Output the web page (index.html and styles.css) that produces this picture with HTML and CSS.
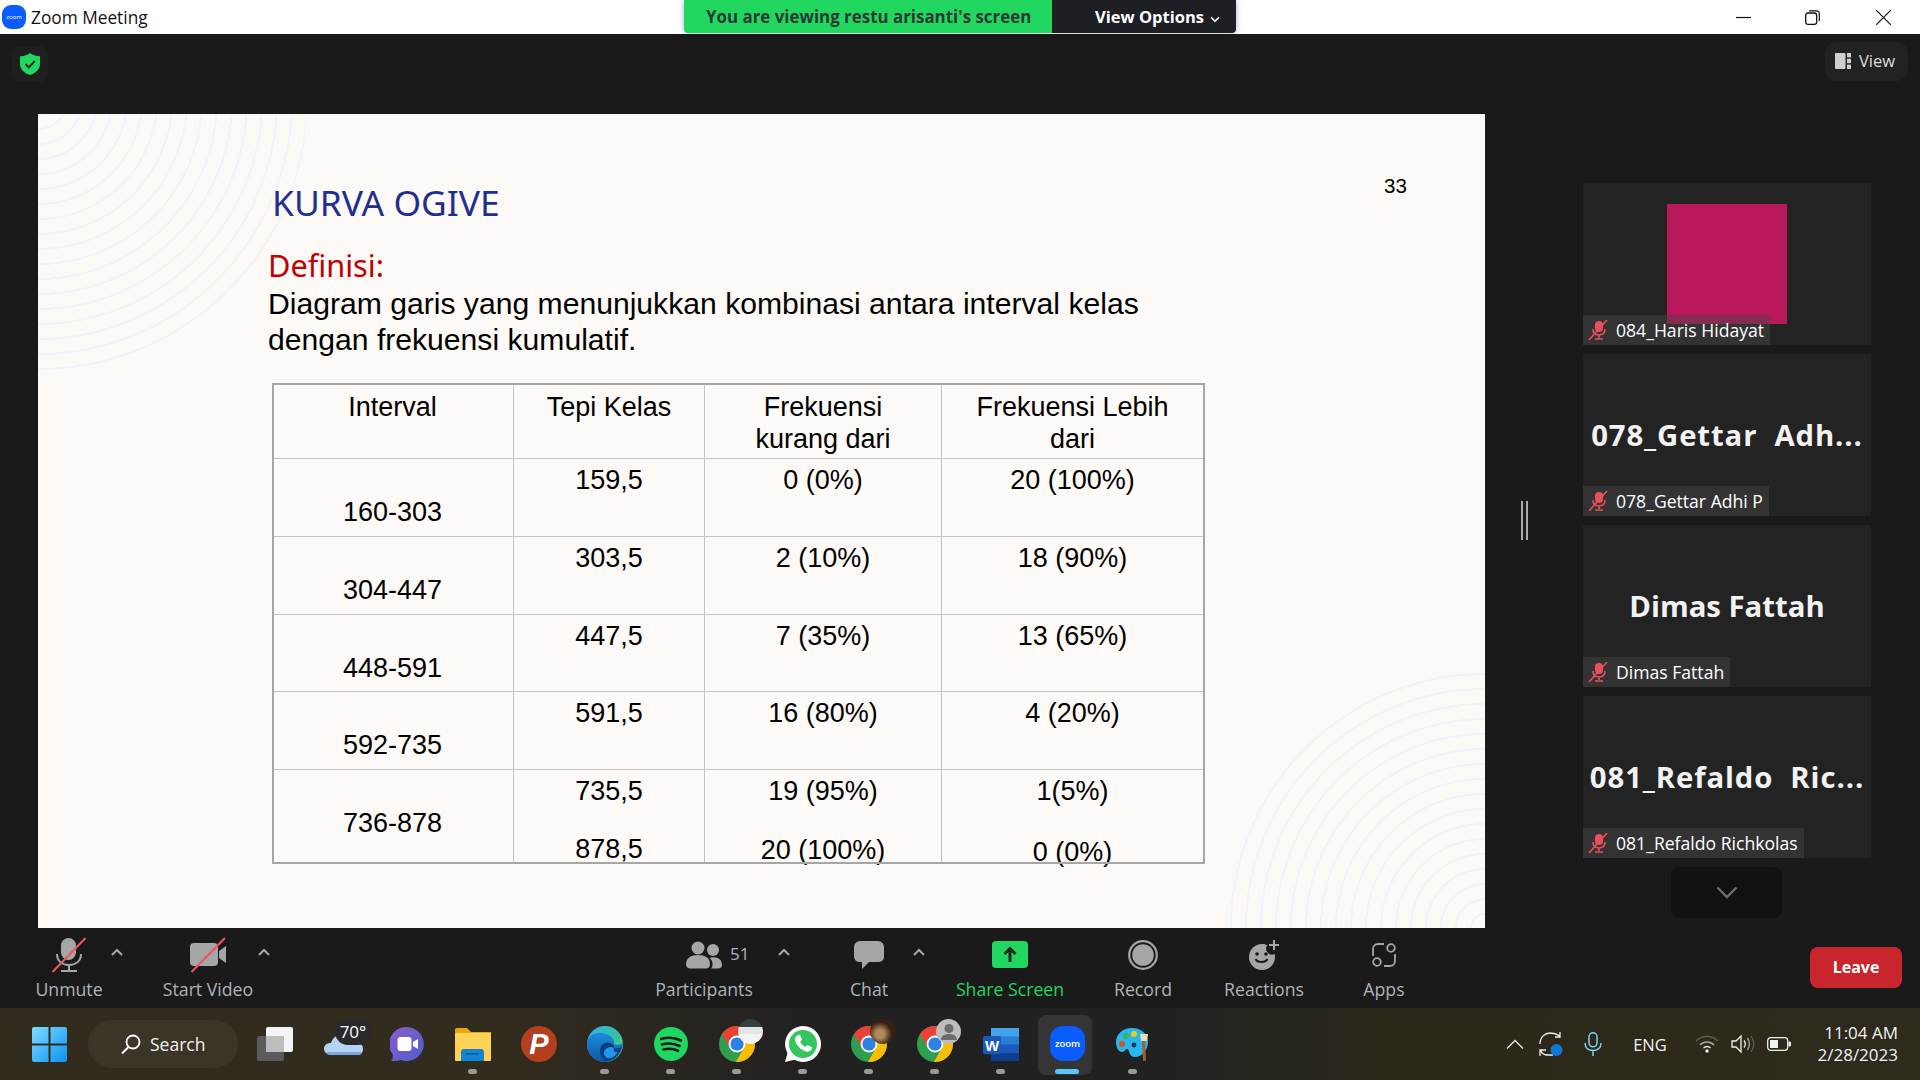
FILE: index.html
```html
<!DOCTYPE html>
<html>
<head>
    <meta charset="utf-8">
    <title>Zoom Meeting</title>
    <link rel="stylesheet" href="styles.css">
</head>
<body>
<svg class="defs" width="0" height="0">
    <symbol id="tagmute" viewBox="0 0 20 20">
        <rect x="7" y="1" width="8" height="11" rx="4" fill="#e8505b"/>
        <path d="M5 9c0 4 2.5 6 6 6s6-2 6-6M11 15v3M7 19h8" fill="none" stroke="#e8505b" stroke-width="1.6"/>
        <path d="M19 0L1 20" stroke="#e8505b" stroke-width="1.6"/>
    </symbol>
    <symbol id="chrome" viewBox="0 0 36 36">
        <clipPath id="chromeclip"><circle cx="18" cy="18" r="18"/></clipPath>
        <g clip-path="url(#chromeclip)">
            <rect width="36" height="36" fill="#2f9e4f"/>
            <polygon points="18,10 40,10 40,-20 -20,-20 -3.9,-4 11.1,22 18,18" fill="#ea4335"/>
            <polygon points="24.9,22 9.9,48 40,48 40,10 18,10 18,18" fill="#fbbc04"/>
        </g>
        <circle cx="18" cy="18" r="8.4" fill="#fff"/>
        <circle cx="18" cy="18" r="6.6" fill="#2f7fe8"/>
    </symbol>
</svg>

<div class="window">
    <div class="titlebar">
        <svg class="app-logo" viewBox="0 0 24 24" width="24" height="24">
            <rect width="24" height="24" rx="9" fill="#0b5cff"/>
            <text x="12" y="14" text-anchor="middle" class="app-logo-txt">zoom</text>
        </svg>
        <div class="app-name">Zoom Meeting</div>
        <div class="winbtns">
            <svg width="15" height="15" viewBox="0 0 15 15"><path d="M0 7.5h15" stroke="#111" stroke-width="1.2"/></svg>
            <svg width="15" height="15" viewBox="0 0 15 15"><rect x="0.7" y="3" width="11" height="11.3" rx="2.4" fill="none" stroke="#111" stroke-width="1.3"/><path d="M4 .8h7.5a2.8 2.8 0 0 1 2.8 2.8V11" fill="none" stroke="#111" stroke-width="1.2"/></svg>
            <svg class="win-close" width="15" height="15" viewBox="0 0 15 15"><path d="M0 0l15 15M15 0L0 15" stroke="#111" stroke-width="1.2"/></svg>
        </div>
    </div>

    <div class="banner">
        <div class="banner-msg">You are viewing restu arisanti's screen</div>
        <div class="banner-opt">View Options
            <svg width="10" height="7" viewBox="0 0 10 7"><path d="M1 1.2l4 4 4-4" fill="none" stroke="#fff" stroke-width="1.6"/></svg>
        </div>
    </div>

    <div class="main">
        <div class="shield">
            <svg width="20" height="22" viewBox="0 0 20 22"><path d="M10 0c2.5 2 5.500 3 10 3.300V11c0 5-4 9-10 11C4 20 0 16 0 11V3.300C4.500 3 7.500 2 10 0z" fill="#22d75f"/><path d="M5.500 11l3.300 3.500 6-6.500" fill="none" stroke="#1f3327" stroke-width="2"/></svg>
        </div>
        <div class="viewbtn">
            <svg width="16" height="16" viewBox="0 0 16 16"><rect width="10.500" height="16" rx="1" fill="#cfcfcf"/><rect x="12" width="4" height="4.400" fill="#cfcfcf"/><rect x="12" y="5.800" width="4" height="4.400" fill="#cfcfcf"/><rect x="12" y="11.600" width="4" height="4.400" fill="#cfcfcf"/></svg>
            View
        </div>

        <div class="stage">
            <div class="slide">
                <div class="rings rings-tl"></div>
                <div class="rings rings-br"></div>
                <div class="pageno">33</div>
                <div class="slide-title">KURVA OGIVE</div>
                <div class="slide-def">Definisi:</div>
                <div class="slide-par">Diagram garis yang menunjukkan kombinasi antara interval kelas<br>dengan frekuensi kumulatif.</div>

                <div class="tbl">
                    <div class="c c-head">Interval</div>
                    <div class="c c-head">Tepi Kelas</div>
                    <div class="c c-head">Frekuensi<br>kurang dari</div>
                    <div class="c c-head c-end">Frekuensi Lebih<br>dari</div>

                    <div class="c c-low">160-303</div>
                    <div class="c">159,5</div>
                    <div class="c">0 (0%)</div>
                    <div class="c c-end">20 (100%)</div>

                    <div class="c c-low">304-447</div>
                    <div class="c">303,5</div>
                    <div class="c">2 (10%)</div>
                    <div class="c c-end">18 (90%)</div>

                    <div class="c c-low">448-591</div>
                    <div class="c">447,5</div>
                    <div class="c">7 (35%)</div>
                    <div class="c c-end">13 (65%)</div>

                    <div class="c c-low">592-735</div>
                    <div class="c">591,5</div>
                    <div class="c">16 (80%)</div>
                    <div class="c c-end">4 (20%)</div>

                    <div class="c c-low c-bot">736-878</div>
                    <div class="c c-bot">735,5<div class="gap26">878,5</div></div>
                    <div class="c c-bot">19 (95%)<div class="gap27">20 (100%)</div></div>
                    <div class="c c-end c-bot">1(5%)<div class="gap29">0 (0%)</div></div>
                </div>
            </div>
        </div>

        <div class="handle"></div>

        <div class="side">
            <div class="tile">
                <div class="avatar"></div>
                <div class="tag"><svg width="20" height="20"><use href="#tagmute"/></svg>084_Haris Hidayat</div>
            </div>
            <div class="tile">
                <div class="bigname bigname-long">078_Gettar  Adh...</div>
                <div class="tag"><svg width="20" height="20"><use href="#tagmute"/></svg>078_Gettar Adhi P</div>
            </div>
            <div class="tile">
                <div class="bigname">Dimas Fattah</div>
                <div class="tag"><svg width="20" height="20"><use href="#tagmute"/></svg>Dimas Fattah</div>
            </div>
            <div class="tile">
                <div class="bigname bigname-long">081_Refaldo  Ric...</div>
                <div class="tag"><svg width="20" height="20"><use href="#tagmute"/></svg>081_Refaldo Richkolas</div>
            </div>
            <div class="more">
                <svg width="22" height="13" viewBox="0 0 22 13"><path d="M1.500 1.500l9.500 9.500 9.500-9.500" fill="none" stroke="#6b6b78" stroke-width="2.400"/></svg>
            </div>
        </div>
    </div>

    <div class="toolbar">
        <div class="tool t-mic">
            <div class="tool-icon">
                <svg width="36" height="36" viewBox="0 0 36 36"><rect x="10" y="1" width="15" height="22" rx="7.500" fill="#a6a6a6"/><path d="M6 17c0 7 5 11 12 11s12-4 12-11M18 28v5M10 34h16" fill="none" stroke="#a6a6a6" stroke-width="2"/><path d="M34.500 1L1.500 35" stroke="#f0555f" stroke-width="2"/></svg>
            </div>
            <div class="tool-lbl">Unmute</div>
        </div>
        <div class="caret c-m7"><svg width="12" height="8" viewBox="0 0 12 8"><path d="M1 7l5-5 5 5" fill="none" stroke="#a6a6a6" stroke-width="2"/></svg></div>
        <div class="tool t-video">
            <div class="tool-icon">
                <svg width="36" height="36" viewBox="0 0 36 36"><rect y="6" width="28" height="23" rx="4" fill="#a6a6a6"/><path d="M29 14l7-5v17l-7-5z" fill="#a6a6a6"/><path d="M35 1L1.500 35" stroke="#f0555f" stroke-width="2"/></svg>
            </div>
            <div class="tool-lbl">Start Video</div>
        </div>
        <div class="caret"><svg width="12" height="8" viewBox="0 0 12 8"><path d="M1 7l5-5 5 5" fill="none" stroke="#a6a6a6" stroke-width="2"/></svg></div>

        <div class="tool t-part">
            <div class="tool-icon">
                <svg width="36" height="28" viewBox="0 0 36 28"><circle cx="12" cy="7" r="6.500" fill="#a6a6a6"/><circle cx="27" cy="9" r="6" fill="#a6a6a6"/><path d="M0 23c0-6 5-9 12-9s12 3 12 9c0 3-2 4.500-4 4.500H4c-2 0-4-1.500-4-4.500z" fill="#a6a6a6"/><path d="M25 27.500c1.500-1 1.500-3 1.500-5 0-2-1-4-3-5.500 1-.5 2.500-.8 4-.8 5 0 8.500 3 8.500 7.500 0 2.500-1.500 3.800-3.500 3.800z" fill="#a6a6a6"/></svg>
            </div>
            <div class="count">51</div>
            <div class="tool-lbl">Participants</div>
        </div>
        <div class="caret c-p24"><svg width="12" height="8" viewBox="0 0 12 8"><path d="M1 7l5-5 5 5" fill="none" stroke="#a6a6a6" stroke-width="2"/></svg></div>
        <div class="tool t-chat">
            <div class="tool-icon">
                <svg width="30" height="28" viewBox="0 0 30 28"><path d="M6 0h18a6 6 0 0 1 6 6v10a5 5 0 0 1-5 5H15l-7 7v-7H6a6 6 0 0 1-6-5V6a6 6 0 0 1 6-6z" fill="#a6a6a6"/></svg>
            </div>
            <div class="tool-lbl">Chat</div>
        </div>
        <div class="caret c-m6"><svg width="12" height="8" viewBox="0 0 12 8"><path d="M1 7l5-5 5 5" fill="none" stroke="#a6a6a6" stroke-width="2"/></svg></div>
        <div class="tool t-share">
            <div class="tool-icon">
                <svg width="36" height="28" viewBox="0 0 36 28"><rect width="36" height="27" rx="4" fill="#22d75f"/><path d="M18 21V8M12.500 13L18 7.500l5.500 5.500" fill="none" stroke="#1a2a20" stroke-width="3"/></svg>
            </div>
            <div class="tool-lbl">Share Screen</div>
        </div>
        <div class="tool t-rec">
            <div class="tool-icon">
                <svg width="30" height="30" viewBox="0 0 30 30"><circle cx="15" cy="15" r="13.800" fill="none" stroke="#a6a6a6" stroke-width="2.200"/><circle cx="15" cy="15" r="10.800" fill="#a6a6a6"/></svg>
            </div>
            <div class="tool-lbl">Record</div>
        </div>
        <div class="tool t-react">
            <div class="tool-icon">
                <svg width="32" height="31" viewBox="0 0 32 31"><path d="M14 4a13 13 0 1 0 13 13c0-1-.1-2-.3-3a6 6 0 0 1-7.500-8.800C18 4.400 16 4 14 4z" fill="#a6a6a6"/><circle cx="9" cy="14" r="1.800" fill="#1a1a1a"/><circle cx="18" cy="14" r="1.800" fill="#1a1a1a"/><path d="M7.500 19c2 4 10 4 12 0" fill="none" stroke="#1a1a1a" stroke-width="2"/><path d="M26 0v10M21 5h10" stroke="#a6a6a6" stroke-width="2"/></svg>
            </div>
            <div class="tool-lbl">Reactions</div>
        </div>
        <div class="tool t-apps">
            <div class="tool-icon">
                <svg width="24" height="24" viewBox="0 0 24 24"><circle cx="19" cy="5" r="3.800" fill="none" stroke="#a6a6a6" stroke-width="1.800"/><circle cx="5" cy="19" r="3.800" fill="none" stroke="#a6a6a6" stroke-width="1.800"/><path d="M1 13V6a5 5 0 0 1 5-5h6M23 11v7a5 5 0 0 1-5 5h-6" fill="none" stroke="#a6a6a6" stroke-width="1.800"/></svg>
            </div>
            <div class="tool-lbl">Apps</div>
        </div>
        <div class="leave">Leave</div>
    </div>

    <div class="taskbar">
        <div class="tb-btn">
            <svg width="35" height="35" viewBox="0 0 35 35"><defs><linearGradient id="wing" x1="0" y1="0" x2="1" y2="1"><stop offset="0" stop-color="#7fdcff"/><stop offset="1" stop-color="#0a93f5"/></linearGradient></defs><path d="M2 0h14.500v16.500H0V2a2 2 0 0 1 2-2zM18.500 0H33a2 2 0 0 1 2 2v14.500H18.500zM0 18.500h16.500V35H2a2 2 0 0 1-2-2zM18.500 18.500H35V33a2 2 0 0 1-2 2H18.500z" fill="url(#wing)"/></svg>
        </div>
        <div class="search">
            <svg width="20" height="20" viewBox="0 0 20 20"><circle cx="12" cy="8" r="6.500" fill="none" stroke="#fff" stroke-width="1.800"/><path d="M7.500 13L1 19.500" stroke="#fff" stroke-width="2"/></svg>
            Search
        </div>
        <div class="tb-btn tb-after-search">
            <svg width="36" height="34" viewBox="0 0 36 34"><rect y="9" width="27" height="25" rx="2" fill="#5b5b5b"/><rect x="9" width="27" height="25" rx="2" fill="#f4f4f4"/><rect x="9" y="9" width="18" height="16" fill="#bdbdbd"/></svg>
        </div>
        <div class="tb-btn">
            <svg class="weather" width="48" height="44" viewBox="0 0 48 44"><path d="M9 36c-5 0-8-3-8-6 0-4 3-6 7-6 2-6 7-9 12-9 6 0 10 4 12 10h4c3 0 4 2 4 5s-2 6-5 6z" fill="#b5d3f5"/><path d="M2 33c2 2 4 3 7 3h26c2 0 3.500-1 4-3z" fill="#7ba8e0"/><rect x="12" y="0" width="36" height="26" rx="13" fill="#2a2a2a"/><text x="30" y="19" text-anchor="middle" class="temp">70°</text></svg>
        </div>
        <div class="tb-btn">
            <svg width="34" height="34" viewBox="0 0 34 34"><defs><linearGradient id="meet" x1="0" y1="0" x2="1" y2="1"><stop offset="0" stop-color="#8a5cc8"/><stop offset="1" stop-color="#4d5fd0"/></linearGradient></defs><path d="M17 0a17 17 0 1 1-6 33c-3 1-7 1-10 1 2-2 2-4 1.500-7A17 17 0 0 1 17 0z" fill="url(#meet)"/><rect x="7.500" y="10" width="14" height="14" rx="3" fill="#fff"/><path d="M23 15l5-3v10l-5-3z" fill="#fff"/></svg>
        </div>
        <div class="tb-btn running">
            <svg width="36" height="33" viewBox="0 0 36 33"><path d="M0 2a2 2 0 0 1 2-2h10l4 4h20v8H0z" fill="#e8a50c"/><rect y="5" width="36" height="28" rx="1" fill="#ffd256"/><path d="M6 33v-9a3 3 0 0 1 3-3h17a3 3 0 0 1 3 3v9z" fill="#1284d8"/><path d="M11 26h13" stroke="#0b5a9f" stroke-width="1.500"/></svg>
        </div>
        <div class="tb-btn">
            <svg width="36" height="36" viewBox="0 0 36 36"><circle cx="18" cy="18" r="18" fill="#b33f20"/><text x="18" y="28" text-anchor="middle" class="psi">P</text></svg>
        </div>
        <div class="tb-btn running">
            <svg width="36" height="36" viewBox="0 0 36 36"><defs><linearGradient id="edge1" x1="0" y1="0" x2="1" y2="1"><stop offset="0" stop-color="#2ab5e8"/><stop offset="0.6" stop-color="#35c1a0"/><stop offset="1" stop-color="#7fe070"/></linearGradient><linearGradient id="edge2" x1="0" y1="0" x2="0" y2="1"><stop offset="0" stop-color="#1a8fdc"/><stop offset="1" stop-color="#0c56a8"/></linearGradient></defs><circle cx="18" cy="18" r="18" fill="url(#edge1)"/><path d="M0 18C1 9 8 6 15 7c8 1 13 6 12 11 5 2 8 0 9-2-.2 10-7 20-18 20C8 36 0 28 0 18z" fill="url(#edge2)"/><path d="M13 25c0-6 5-10 10-8 3 1 4 3 4 5 3 1 6 0 8-2-2 9-9 15-17 15-3-3-5-6-5-10z" fill="#0a3f84"/><path d="M18 24c2-3 6-4 9-2-1 3 0 5 4 4-3 5-8 7-11 6-3-2-4-5-2-8z" fill="#2196e8"/></svg>
        </div>
        <div class="tb-btn running">
            <svg width="34" height="34" viewBox="0 0 34 34"><circle cx="17" cy="17" r="17" fill="#1ed760"/><path d="M7 12c7-2 14-1.500 20 1.500M8 17.500c6-1.700 12-1.200 17.500 1.500M9.500 22.500c5-1.200 10-.8 14.500 1.300" fill="none" stroke="#1a1a1a" stroke-width="2.600" stroke-linecap="round"/></svg>
        </div>
        <div class="tb-btn running">
            <svg class="chrome-ic" width="36" height="36"><use href="#chrome"/></svg>
            <span class="badge badge-page"></span>
        </div>
        <div class="tb-btn running">
            <svg width="36" height="36" viewBox="0 0 36 36"><path d="M18 0a18 18 0 1 1-8.600 33.800L0 36l2.500-9A18 18 0 0 1 18 0z" fill="#fff"/><circle cx="18" cy="18" r="14" fill="#35c55f"/><path d="M12.500 9.500c1-1 2.500-.8 3 .3l1.200 3c.3.700 0 1.300-.5 1.900l-1 1.200c1 2 2.800 3.800 5 5l1.300-1.200c.6-.5 1.300-.7 2-.3l2.800 1.500c1 .5 1.100 2 .2 2.900-1.500 1.600-3.500 2.200-5.500 1.600-5-1.500-9.500-6-11-11-.5-2 .6-3.600 2.500-4.900z" fill="#fff"/></svg>
        </div>
        <div class="tb-btn running">
            <svg class="chrome-ic" width="36" height="36"><use href="#chrome"/></svg>
            <span class="badge badge-photo"></span>
        </div>
        <div class="tb-btn running">
            <svg class="chrome-ic" width="36" height="36"><use href="#chrome"/></svg>
            <span class="badge badge-user">
                <svg width="24" height="24" viewBox="0 0 24 24"><circle cx="12" cy="8.500" r="4.500" fill="#6c6c6c"/><path d="M4 20c0-4 3.500-6 8-6s8 2 8 6z" fill="#6c6c6c"/></svg>
            </span>
        </div>
        <div class="tb-btn running">
            <svg width="36" height="33" viewBox="0 0 36 33"><rect x="8" y="0" width="28" height="33" rx="2" fill="#2b7cd3"/><rect x="8" y="0" width="28" height="8.500" fill="#41a5ee"/><rect x="8" y="16.500" width="28" height="8.500" fill="#185abd"/><rect x="8" y="25" width="28" height="8" fill="#103f91"/><rect y="8" width="18" height="18" rx="1.500" fill="#185abd"/><text x="9" y="22.500" text-anchor="middle" class="wordw">W</text></svg>
        </div>
        <div class="tb-btn active">
            <span class="active-back"></span>
            <span class="active-box"></span>
            <svg class="active-ic" width="35" height="35" viewBox="0 0 35 35"><rect width="35" height="35" rx="13" fill="#0b5cff"/><text x="17.500" y="21" text-anchor="middle" class="zoomtxt">zoom</text></svg>
            <span class="active-bar"></span>
        </div>
        <div class="tb-btn running">
            <svg width="34" height="34" viewBox="0 0 34 34"><path d="M16 1C7 1 0 7 0 15c0 6 3 10 6 10s3-3 5-3c3 0 1 8 8 8 7 0 13-7 13-15S25 1 16 1z" fill="#29b6ee"/><circle cx="10" cy="9" r="3" fill="#3cb54a"/><circle cx="18" cy="7" r="3" fill="#f7c518"/><circle cx="6" cy="17" r="3" fill="#d9531e"/><circle cx="18" cy="18" r="2.400" fill="#0e3a5c"/><path d="M26 14l3-.3 1 20h-3z" fill="#a0622a"/><path d="M24 7h8l-1 7h-6z" fill="#e8dcc0"/></svg>
        </div>

        <div class="tray">
            <svg width="18" height="10" viewBox="0 0 18 10"><path d="M1 9.500L9 1.500l8 8" fill="none" stroke="#e8e8e8" stroke-width="1.300"/></svg>
            <svg class="tr-sync" width="24" height="24" viewBox="0 0 24 24"><path d="M1 12C1 5 6 1 11 1c3 0 7 1 10 3M21 0v5h-5M14 23H9c-3 0-6-1-7-4M1 24v-6h6" fill="none" stroke="#f0f0f0" stroke-width="1.300"/><circle cx="17.500" cy="18" r="6" fill="#0f78d4"/></svg>
            <svg class="tr-mic" width="18" height="24" viewBox="0 0 18 24"><rect x="5" y="0.800" width="8" height="14" rx="4" fill="none" stroke="#7cd2ee" stroke-width="1.500"/><path d="M1 11c0 5 3.500 7.500 8 7.500s8-2.500 8-7.500M9 18.500V24" fill="none" stroke="#7cd2ee" stroke-width="1.500"/></svg>
            <div class="tr-lang">ENG</div>
            <svg class="tr-wifi" width="24" height="18" viewBox="0 0 24 18"><path d="M1 6c6-6 16-6 22 0" fill="none" stroke="#5f5c50" stroke-width="1.400"/><path d="M5 10c4-4 10-4 14 0" fill="none" stroke="#a8a69c" stroke-width="1.400"/><path d="M8.500 13c2-1.700 5-1.700 7 0" fill="none" stroke="#f0f0f0" stroke-width="1.400"/><circle cx="12" cy="16" r="1.700" fill="#f0f0f0"/></svg>
            <svg class="tr-vol" width="24" height="20" viewBox="0 0 24 20"><path d="M1 7h4l5-5v16l-5-5H1z" fill="none" stroke="#f0f0f0" stroke-width="1.300"/><path d="M13 6.500c1.500 2 1.500 5 0 7" fill="none" stroke="#f0f0f0" stroke-width="1.300"/><path d="M16.500 4c2.500 3.500 2.500 8.500 0 12" fill="none" stroke="#a8a69c" stroke-width="1.300"/><path d="M20 2c3.500 5 3.500 11 0 16" fill="none" stroke="#5f5c50" stroke-width="1.300"/></svg>
            <svg class="tr-bat" width="24" height="14" viewBox="0 0 24 14"><rect x="0.700" y="0.700" width="20" height="12.600" rx="3" fill="none" stroke="#f0f0f0" stroke-width="1.300"/><rect x="3" y="3" width="8" height="8" fill="#f0f0f0"/><rect x="21.500" y="4.500" width="2.500" height="5" rx="1" fill="#f0f0f0"/></svg>
            <div class="clock">11:04 AM<br>2/28/2023</div>
        </div>
    </div>
</div>
</body>
</html>
```

FILE: styles.css
```css
* {
    box-sizing: border-box;
}

body {
    margin: 0;
    background-color: #1a1a1a;
    font-family: "Open Sans", "Noto Sans", sans-serif;
    overflow: hidden;
}

.defs {
    position: absolute;
}

.window {
    position: relative;
    display: flex;
    flex-direction: column;
    width: 1920px;
    height: 1080px;
}

/* title bar */
.titlebar {
    display: flex;
    align-items: center;
    height: 34px;
    padding-left: 2px;
    background-color: #fff;
}

.app-logo-txt {
    font-size: 6px;
    fill: #fff;
}

.app-name {
    margin-left: 5px;
    font-size: 17.300px;
    color: #111;
}

.winbtns {
    display: flex;
    gap: 54px;
    margin-left: auto;
    margin-right: 29px;
}

.win-close {
    margin-left: 2px;
}

.banner {
    position: absolute;
    top: 0;
    left: 684px;
    display: flex;
    height: 33px;
    border-radius: 0 0 4px 4px;
    overflow: hidden;
    font-weight: 700;
    line-height: 33px;
    box-shadow: 0 0 6px rgba(0, 0, 0, .3);
}

.banner-msg {
    width: 368px;
    padding-left: 22px;
    background-color: #22d75f;
    color: #2c3a34;
    font-size: 16.900px;
}

.banner-opt {
    width: 184px;
    padding-left: 43px;
    background-color: #1e1f24;
    color: #fff;
    font-size: 16.500px;
}

.banner-opt svg {
    margin-left: 2px;
}

/* main area */
.main {
    position: relative;
    display: flex;
    height: 894px;
}

.shield {
    position: absolute;
    left: 12px;
    top: 12px;
    display: flex;
    align-items: center;
    justify-content: center;
    width: 36px;
    height: 36px;
    border-radius: 8px;
    background-color: #1f1f1f;
}

.viewbtn {
    position: absolute;
    left: 1825px;
    top: 8px;
    display: flex;
    align-items: center;
    gap: 8px;
    width: 83px;
    height: 39px;
    padding: 0 0 2px 10px;
    border-radius: 12px;
    background-color: #222;
    color: #ddd;
    font-size: 16.500px;
}

.stage {
    padding: 80px 0 0 38px;
}

.slide {
    position: relative;
    width: 1447px;
    height: 814px;
    padding: 66px 0 0 230px;
    background-color: #fdf9f6;
    font-family: "Liberation Sans", Arial, sans-serif;
    color: #000;
    overflow: hidden;
}

.rings {
    position: absolute;
    width: 268px;
    height: 268px;
}

.rings-tl {
    left: 0;
    top: 0;
    border-bottom-right-radius: 100%;
    background: repeating-radial-gradient(circle at 0 -14px, transparent 0 13px, #f2f4fb 13px 15px);
}

.rings-br {
    right: 0;
    bottom: 0;
    border-top-left-radius: 100%;
    background: repeating-radial-gradient(circle at 100% 100%, transparent 0 13px, #f2f4fb 13px 15px);
}

.pageno {
    position: absolute;
    left: 1346px;
    top: 60px;
    font-size: 20.500px;
    line-height: 24px;
}

.slide-title {
    position: relative;
    margin-left: 4px;
    font-family: "Noto Sans", sans-serif;
    font-size: 35.400px;
    line-height: 44px;
    color: #1f2f8f;
}

.slide-def {
    position: relative;
    margin-top: 21px;
    font-family: "Noto Sans", sans-serif;
    font-size: 30.700px;
    line-height: 40px;
    color: #c00000;
}

.slide-par {
    position: relative;
    margin-top: 1px;
    font-size: 30.130px;
    line-height: 36px;
}

.tbl {
    position: relative;
    display: grid;
    grid-template-columns: 242px 191px 237px 263px;
    grid-template-rows: 76px 78px 78px 77px 78px 94px;
    width: 933px;
    height: 481px;
    margin: 25px 0 0 4px;
    outline: 2px solid #a6a6a6;
    outline-offset: -2px;
    font-size: 27px;
    line-height: 32px;
    text-align: center;
}

.c {
    padding-top: 5px;
    border-right: 1px solid #c4c4c4;
    border-bottom: 1px solid #c4c4c4;
}

.c-head {
    padding-top: 8px;
}

.c-end {
    padding-right: 2px;
    border-right: 0;
}

.c-bot {
    border-bottom: 0;
}

.c-low {
    padding-top: 37px;
}

.gap26 {
    margin-top: 26px;
}

.gap27 {
    margin-top: 27px;
}

.gap29 {
    margin-top: 29px;
}

/* participant strip */
.handle {
    width: 7px;
    height: 39px;
    margin: 467px 0 0 36px;
    border-left: 2px solid #a9a9a9;
    border-right: 2px solid #a9a9a9;
}

.side {
    display: flex;
    flex-direction: column;
    gap: 9px;
    width: 288px;
    margin-left: 55px;
    padding-top: 149px;
}

.tile {
    position: relative;
    display: flex;
    align-items: flex-start;
    justify-content: center;
    height: 162px;
    background-color: #232323;
}

.avatar {
    width: 120px;
    height: 120px;
    margin-top: 21px;
    background-color: #b9185a;
}

.bigname {
    margin-top: 63px;
    font-size: 29.300px;
    font-weight: 700;
    line-height: 36px;
    color: #f2f2f2;
    white-space: pre;
}

.bigname-long {
    letter-spacing: .9px;
}

.tag {
    position: absolute;
    left: 0;
    bottom: 0;
    display: flex;
    align-items: center;
    height: 30px;
    padding: 0 6px 0 5px;
    background-color: rgba(70, 70, 70, .45);
    font-size: 17.600px;
    color: #fff;
}

.tag svg {
    margin-right: 8px;
}

.more {
    display: flex;
    align-items: center;
    justify-content: center;
    width: 111px;
    height: 51px;
    margin: 0 0 0 88px;
    border-radius: 8px;
    background-color: #111;
}

/* meeting controls */
.toolbar {
    display: flex;
    align-items: flex-start;
    height: 80px;
    padding: 8px 18px 0 20px;
    background-color: #1a1a1a;
}

.tool {
    position: relative;
    display: flex;
    flex-direction: column;
    align-items: center;
    flex-shrink: 0;
}

.tool-icon {
    display: flex;
    align-items: center;
    justify-content: center;
    height: 40px;
    padding-bottom: 2px;
}

.tool-lbl {
    margin-top: 2px;
    font-size: 17.700px;
    font-weight: 500;
    line-height: 22px;
    color: #aeb3b8;
    white-space: nowrap;
}

.t-mic {
    width: 98px;
}

.t-video {
    width: 100px;
    margin-left: 35px;
}

.t-part {
    width: 100px;
    margin-left: 384px;
}

.t-chat {
    width: 100px;
    margin-left: 29px;
}

.t-share {
    width: 110px;
    margin-left: 30px;
}

.t-share .tool-lbl {
    color: #22d75f;
}

.t-rec {
    width: 60px;
    margin-left: 48px;
}

.t-react {
    width: 84px;
    margin-left: 49px;
}

.t-apps {
    width: 44px;
    margin-left: 56px;
}

.count {
    position: absolute;
    left: 76px;
    top: 7px;
    font-size: 17px;
    font-weight: 500;
    line-height: 22px;
    color: #aeb3b8;
}

.caret {
    flex-shrink: 0;
    width: 12px;
    margin-top: 12px;
    line-height: 0;
}

.c-m7 {
    margin-left: -7px;
}

.c-p24 {
    margin-left: 24px;
}

.c-m6 {
    margin-left: -6px;
}

.leave {
    width: 92px;
    height: 41px;
    margin: 11px 0 0 auto;
    border-radius: 8px;
    background-color: #c9252d;
    color: #fff;
    font-size: 16px;
    font-weight: 700;
    line-height: 41px;
    text-align: center;
}

/* windows taskbar */
.taskbar {
    display: flex;
    align-items: center;
    height: 72px;
    padding-left: 16px;
    background: linear-gradient(to right, #312c1d 0, #322c1e 26%, #222121 42%, #222121 60%, #2b2719 72%, #2e2a1c 100%);
}

.tb-btn {
    position: relative;
    display: flex;
    align-items: center;
    justify-content: center;
    flex-shrink: 0;
    width: 66px;
    height: 72px;
}

.tb-after-search {
    margin-left: 4px;
}

.running::after {
    content: "";
    position: absolute;
    left: 28px;
    bottom: 6px;
    width: 9px;
    height: 5px;
    border-radius: 3px;
    background-color: #9a9a98;
}

.search {
    display: flex;
    align-items: center;
    gap: 9px;
    width: 150px;
    height: 48px;
    margin-left: 6px;
    padding-left: 33px;
    border-radius: 24px;
    background-color: #3a3526;
    color: #f2f2f2;
    font-size: 17.500px;
}

.weather {
    margin: 0 0 6px 12px;
}

.temp {
    font-family: "Open Sans", sans-serif;
    font-size: 17px;
    fill: #fff;
}

.psi {
    font-family: "Liberation Sans", sans-serif;
    font-size: 29px;
    font-weight: 700;
    font-style: italic;
    fill: #fff;
}

.wordw {
    font-family: "Liberation Sans", sans-serif;
    font-size: 15px;
    font-weight: 700;
    fill: #fff;
}

.zoomtxt {
    font-family: "Open Sans", sans-serif;
    font-size: 9.500px;
    font-weight: 600;
    fill: #fff;
}

.badge {
    position: absolute;
    left: 34px;
    top: 11px;
    display: flex;
    align-items: center;
    justify-content: center;
    width: 25px;
    height: 25px;
    border-radius: 50%;
}

.badge-page {
    background: linear-gradient(#33403f 0 30%, #e4e4e4 30% 60%, #f4f4f4 60%);
}

.badge-photo {
    background: radial-gradient(circle at 40% 60%, #b08a5a 0 20%, #3a1f14 55%);
}

.badge-user {
    background-color: #bdbdbd;
}

.active-back {
    position: absolute;
    left: 48px;
    top: 7px;
    width: 11px;
    height: 60px;
    border-radius: 0 8px 8px 0;
    background-color: #2c2c2c;
}

.active-box {
    position: absolute;
    left: 4px;
    top: 7px;
    width: 53px;
    height: 60px;
    border-radius: 8px;
    background-color: #353538;
}

.active-ic {
    position: relative;
    top: -1px;
}

.active-bar {
    position: absolute;
    left: 21px;
    bottom: 6px;
    width: 24px;
    height: 5px;
    border-radius: 3px;
    background-color: #5cc5f5;
}

.tray {
    display: flex;
    align-items: center;
    margin-left: auto;
    padding-right: 22px;
}

.tr-sync {
    margin-left: 15px;
}

.tr-mic {
    margin-left: 21px;
}

.tr-lang {
    width: 36px;
    margin-left: 30px;
    color: #f2f2f2;
    font-size: 16.500px;
    text-align: center;
}

.tr-wifi {
    margin-left: 27px;
}

.tr-vol {
    margin-left: 12px;
}

.tr-bat {
    margin-left: 12px;
}

.clock {
    width: 90px;
    margin-left: 17px;
    color: #f2f2f2;
    font-size: 17px;
    line-height: 22px;
    text-align: right;
}
```
